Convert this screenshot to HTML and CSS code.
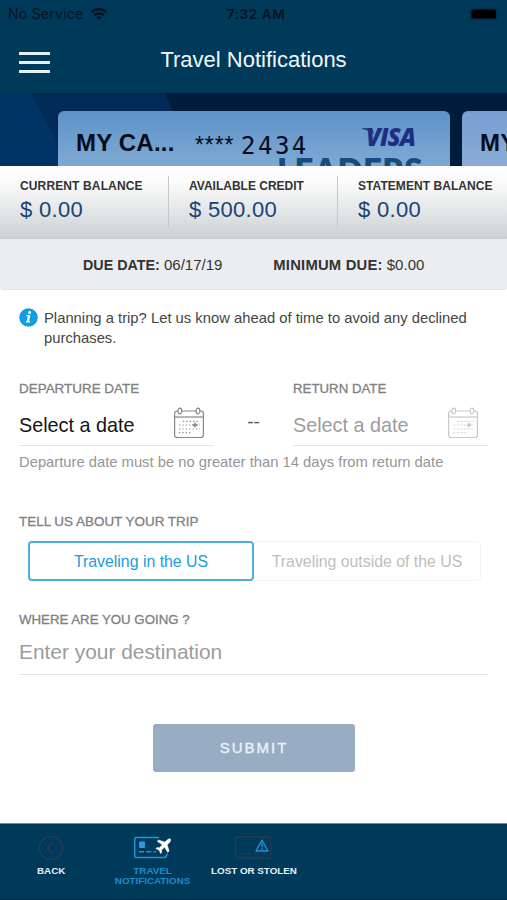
FILE: index.html
```html
<!DOCTYPE html>
<html lang="en">
<head>
<meta charset="utf-8">
<title>Travel Notifications</title>
<link rel="stylesheet" href="styles.css">
</head>
<body>
<div class="app">
  <header class="header">
    <div class="status">
      <div class="carrier"><span class="carrier-name">No Service</span>
        <svg class="wifi" width="18" height="14" viewBox="0 0 18 14"><g fill="none" stroke="#02131f" stroke-width="2.500"><path d="M1.400 5.200a11 11 0 0 1 15.200 0"/><path d="M4.400 8.400a6.700 6.700 0 0 1 9.200 0"/></g><path d="M6.400 10.400a3.900 3.900 0 0 1 5.200 0L9 13z" fill="#02131f"/></svg>
      </div>
      <span class="clock">7:32 AM</span>
      <svg class="battery" width="32" height="14" viewBox="0 0 32 14"><rect x=".7" y=".7" width="28" height="12.600" rx="3.500" fill="#032e4b" stroke="#0b3351"/><rect x="2.500" y="2.700" width="24.500" height="8.800" rx="1.600" fill="#000"/><path d="M30 5q2 2 0 4z" fill="#02283f"/></svg>
    </div>
    <div class="navbar">
      <div class="menu"><i></i><i></i><i></i></div>
      <h1>Travel Notifications</h1>
    </div>
  </header>

  <section class="carousel">
    <div class="card">
      <span class="card-name">MY CA...</span>
      <span class="card-mask">****</span>
      <span class="card-digits">2434</span>
      <span class="visa"><span class="visa-text">VISA</span><svg class="visa-flick" width="14" height="6" viewBox="0 0 14 6"><path d="M0 .2h8q2.200 0 2.800 2L12 6Q7.500 1.900 0 .9z" fill="#202d73"/></svg></span>
      <span class="leaders">LEADERS</span>
    </div>
    <div class="card card-next"><span class="card-name">MY CARD</span></div>
  </section>

  <section class="balances">
    <div class="balance"><span class="label l1">CURRENT BALANCE</span><span class="amount">$ 0.00</span></div>
    <div class="balance"><span class="label l2">AVAILABLE CREDIT</span><span class="amount">$ 500.00</span></div>
    <div class="balance"><span class="label l3">STATEMENT BALANCE</span><span class="amount">$ 0.00</span></div>
  </section>

  <section class="due">
    <span class="due-date"><b>DUE DATE:</b> 06/17/19</span>
    <span class="due-min"><b>MINIMUM DUE:</b> $0.00</span>
  </section>

  <main class="main">
    <div class="info">
      <svg width="19" height="19" viewBox="0 0 19 19"><circle cx="9.500" cy="9.500" r="9.300" fill="#0c9fe6"/><circle cx="10.600" cy="4.600" r="1.500" fill="#fff"/><path d="M6.900 13.700h4M7.300 7.600h3" fill="none" stroke="#fff" stroke-width="1.400"/><path d="M10.200 7L8.800 14" stroke="#fff" stroke-width="2.200"/></svg>
      <p>Planning a trip? Let us know ahead of time to avoid any declined<br>purchases.</p>
    </div>

    <div class="dates">
      <div class="field">
        <label class="caption c1">DEPARTURE DATE</label>
        <div class="date"><span>Select a date</span>
          <svg class="cal" width="32" height="32" viewBox="0 0 32 32"><g fill="none" stroke="#858585" stroke-width="1.200"><rect x="1.600" y="4" width="28.800" height="26.500" rx="2.500"/><path d="M2 10h28"/><ellipse cx="6.800" cy="4" rx="1.900" ry="2.800" fill="#fff"/><ellipse cx="25" cy="4" rx="1.900" ry="2.800" fill="#fff"/><path d="M10 14.400h17M6 18h21M6 22h21M6 25.600h13" stroke-dasharray="1.200 2.200"/><path d="M19 18h6M22 15.500v5" stroke-width="1"/></g><circle cx="22" cy="18" r="1.700" fill="#858585"/></svg>
        </div>
      </div>
      <span class="dash">--</span>
      <div class="field field-off">
        <label class="caption c2">RETURN DATE</label>
        <div class="date"><span>Select a date</span>
          <svg class="cal" width="32" height="32" viewBox="0 0 32 32"><g fill="none" stroke="#c9c9c9" stroke-width="1.200"><rect x="1.600" y="4" width="28.800" height="26.500" rx="2.500"/><path d="M2 10h28"/><ellipse cx="6.800" cy="4" rx="1.900" ry="2.800" fill="#fff"/><ellipse cx="25" cy="4" rx="1.900" ry="2.800" fill="#fff"/><path d="M10 14.400h17M6 18h21M6 22h21M6 25.600h13" stroke="#dedede" stroke-dasharray="2.400 1.200"/></g><circle cx="22" cy="18" r="1.900" fill="#c4c4c4"/></svg>
        </div>
      </div>
    </div>
    <p class="hint">Departure date must be no greater than 14 days from return date</p>

    <h2 class="caption c3">TELL US ABOUT YOUR TRIP</h2>
    <div class="segment">
      <button class="seg on">Traveling in the US</button>
      <button class="seg off">Traveling outside of the US</button>
    </div>

    <h2 class="caption c4">WHERE ARE YOU GOING ?</h2>
    <div class="destination"><span>Enter your destination</span></div>

    <button class="submit">SUBMIT</button>
  </main>

  <nav class="tabs">
    <div class="tab">
      <svg width="26" height="26" viewBox="0 0 26 26"><g fill="none" stroke="#263c4e" stroke-width="1.500"><circle cx="13" cy="13" r="11.500"/><path d="M15 7.500L9.500 13l5.500 5.500"/></g></svg>
      <span class="t1">BACK</span>
    </div>
    <div class="tab active">
      <svg width="38" height="26" viewBox="0 0 38 26"><path d="M26 2.500H3.700Q1.700 2.500 1.700 4.500V20.500q0 2 2 2H31q2.500 0 3.200-4" fill="none" stroke="#1f98d5" stroke-width="1.500"/><rect x="6" y="6.500" width="6" height="6.500" rx=".8" fill="#269cdb"/><path d="M6 16.800h17" stroke="#1f98d5" stroke-width="1.500" stroke-dasharray="5 2.300"/><path d="M37.600 4q-1.500-1-3.300.8L31.800 7.100 25.500 5l-1.300 1.300 5 3.500-2.800 3-2.500-.3-1 1.200 3.200 1.600 1.500 3.200 1.200-1-.2-2.600 2.900-2.700 3.300 5.200 1.400-1.400-1.900-6.300 2.500-2.500q1.600-2 .8-3.200z" fill="#fff" stroke="#fff" stroke-width=".4"/></svg>
      <span class="t2">TRAVEL<br>NOTIFICATIONS</span>
    </div>
    <div class="tab">
      <svg width="38" height="26" viewBox="0 0 38 26"><rect x="1.500" y="2" width="35" height="21" rx="1.500" fill="none" stroke="#263c4e" stroke-width="1.300"/><path d="M5 18.500h28" stroke="#263c4e" stroke-width="1.500" stroke-dasharray="5 2.500"/><path d="M28 5.200l6 10.800H22z" fill="#003a5a" stroke="#1f92d0" stroke-width="1.400" stroke-linejoin="round"/><path d="M28 8.300v4M28 13.300v1.500" stroke="#1f92d0" stroke-width="1.500"/></svg>
      <span class="t3">LOST OR STOLEN</span>
    </div>
  </nav>
</div>
</body>
</html>
```
FILE: styles.css
```css
* { box-sizing: border-box; }
body { margin: 0; background: #fff; font-family: "Liberation Sans", Arial, sans-serif; color: #333; }
h1, h2, p { margin: 0; font-weight: 400; }
button { font-family: inherit; padding: 0; }
svg { display: block; }
.app { width: 507px; height: 900px; display: flex; flex-direction: column; overflow: hidden; white-space: nowrap; }

.header { height: 93px; background: #003a5a; flex: none; }
.status { height: 27px; display: grid; grid-template-columns: 1fr auto 1fr; align-items: center; padding: 0 6px 0 8px; color: #02131f; font-family: Inter, sans-serif; }
.carrier { display: flex; align-items: center; gap: 7px; font-size: 14px; }
.carrier-name { letter-spacing: .25px; }
.clock { font-size: 13.500px; font-weight: 600; letter-spacing: .6px; padding-left: 3px; }
.battery { justify-self: end; }
.navbar { height: 66px; display: grid; grid-template-columns: 80px 1fr 80px; align-items: start; }
.menu { display: flex; flex-direction: column; gap: 6px; padding: 25px 0 0 19px; }
.menu i { width: 31px; height: 3px; background: #e3f1f7; }
h1 { color: #f0f8fc; font-size: 22px; line-height: 26px; padding-top: 20px; text-align: center; }

.carousel { height: 73px; flex: none; display: flex; gap: 12px; padding: 18px 0 0 58px; overflow: hidden;
  background: linear-gradient(62deg, #003466 0 61px, transparent 62px), linear-gradient(67deg, #012b56 0 180px, #001c3d 181px); }
.card { position: relative; flex: none; width: 392px; height: 80px; border-radius: 6px 6px 0 0; background: linear-gradient(#5c93c8, #80a9d4 55px); display: flex; padding: 0 0 0 18px; color: #030c17; }
.card-next { background: linear-gradient(#769fd0, #8babd6 55px); }
.card-name { width: 119px; font-size: 24px; line-height: 28px; padding-top: 18px; font-weight: 700; letter-spacing: .2px; }
.card-mask { width: 46px; font-size: 23px; letter-spacing: .9px; line-height: 28px; padding-top: 20px; }
.card-digits { font: 24px/28px "DejaVu Sans Mono", monospace; padding-top: 21px; letter-spacing: 2.500px; }
.visa { position: absolute; left: 308px; top: 12px; color: #202d84; }
.visa-text { font: italic 800 24px/28px "Open Sans", sans-serif; letter-spacing: -.9px; }
.visa-flick { position: absolute; left: -4px; top: 5px; }
.leaders { position: absolute; left: 219px; top: 41px; font: 800 33px/36px Lato, sans-serif; color: #184d7b; letter-spacing: .3px; }

.balances { height: 73px; flex: none; display: grid; grid-template-columns: 169px 169px 169px; background: linear-gradient(#fff 0, #fafafa 18px, #cdd1d3 72px, #c5c9cb); }
.balance { display: flex; flex-direction: column; padding: 12px 0 0 20px; background: linear-gradient(#c5c8ca, #c5c8ca) right 10px / 1px 52px no-repeat; }
.balance:last-child { background: none; }
.label { font-size: 12px; line-height: 16px; font-weight: 700; }
.l1 { letter-spacing: .13px; }
.l3 { letter-spacing: .06px; }
.amount { color: #174475; font-size: 22px; line-height: 26px; margin-top: 3px; letter-spacing: .3px; }

.due { height: 51px; flex: none; background: #ebedf0; border-radius: 0 0 4px 4px; border-bottom: 1px solid #e3e5e8; display: flex; gap: 51px; padding: 17px 0 0 83px; font-size: 15px; line-height: 18px; }
.due b { font-size: 14.300px; }
.due-min b { font-size: 14.800px; letter-spacing: .2px; }

.main { flex: 1; padding: 0 19px; }
.info { display: flex; gap: 6px; padding-top: 18px; }
.info p { font-size: 14.800px; line-height: 20px; color: #454545; }
.dates { display: flex; height: 95px; margin-top: 32px; }
.field { width: 195px; }
.caption { display: block; font-size: 13.450px; line-height: 18px; color: #808080; -webkit-text-stroke: .3px #808080; }
.c2, .c4 { font-size: 13.250px; }
.date { display: flex; justify-content: space-between; height: 48px; border-bottom: 1px solid #e5e5e5; font-size: 19.800px; line-height: 24px; color: #151515; padding: 9px 10px 0 0; }
.date span { padding-top: 6px; }
.cal { margin: 0 -1px 0 1px; }
.field-off .date { color: #9c9c9c; }
.dash { width: 79px; text-align: center; padding-top: 31px; font-size: 19px; line-height: 22px; color: #555; }
.hint { font-size: 14.780px; line-height: 18px; color: #959595; margin-top: -22px; }
.c3 { margin-top: 42px; }
.segment { display: flex; margin: 10px 7px 0 9px; }
.seg { background: #fff; font-size: 15.850px; height: 40px; padding-top: 1px; }
.on { width: 226px; color: #219bd8; border: 2px solid #4daedc; border-radius: 4px; }
.off { width: 227px; color: #bebebe; border: 1px solid #f4f4f4; border-left: 0; border-radius: 0 4px 4px 0; }
.c4 { margin-top: 30px; }
.destination { font-size: 20.900px; line-height: 24px; color: #9c9c9c; height: 46px; padding-top: 11px; border-bottom: 1px solid #e5e5e5; }
.submit { display: block; width: 202px; height: 48px; margin: 49px auto 0 134px; border: 0; border-radius: 3px; background: #98adc3; color: #eaf5fb; font-size: 15px; letter-spacing: 2px; padding-bottom: 2px; -webkit-text-stroke: .3px #eaf5fb; }

.tabs { height: 77px; flex: none; background: #003a5a; border-top: 1px solid #6f8d9f; border-bottom: 1px solid #002b48; display: grid; grid-template-columns: repeat(5, 101.400px); padding-top: 11px; }
.tab { display: flex; flex-direction: column; align-items: center; text-align: center; font-size: 9.800px; line-height: 10px; font-weight: 700; color: #e7f1f6; }
.tab span { margin-top: 5px; padding-left: 1px; }
.active { color: #1b8dcc; }
```
